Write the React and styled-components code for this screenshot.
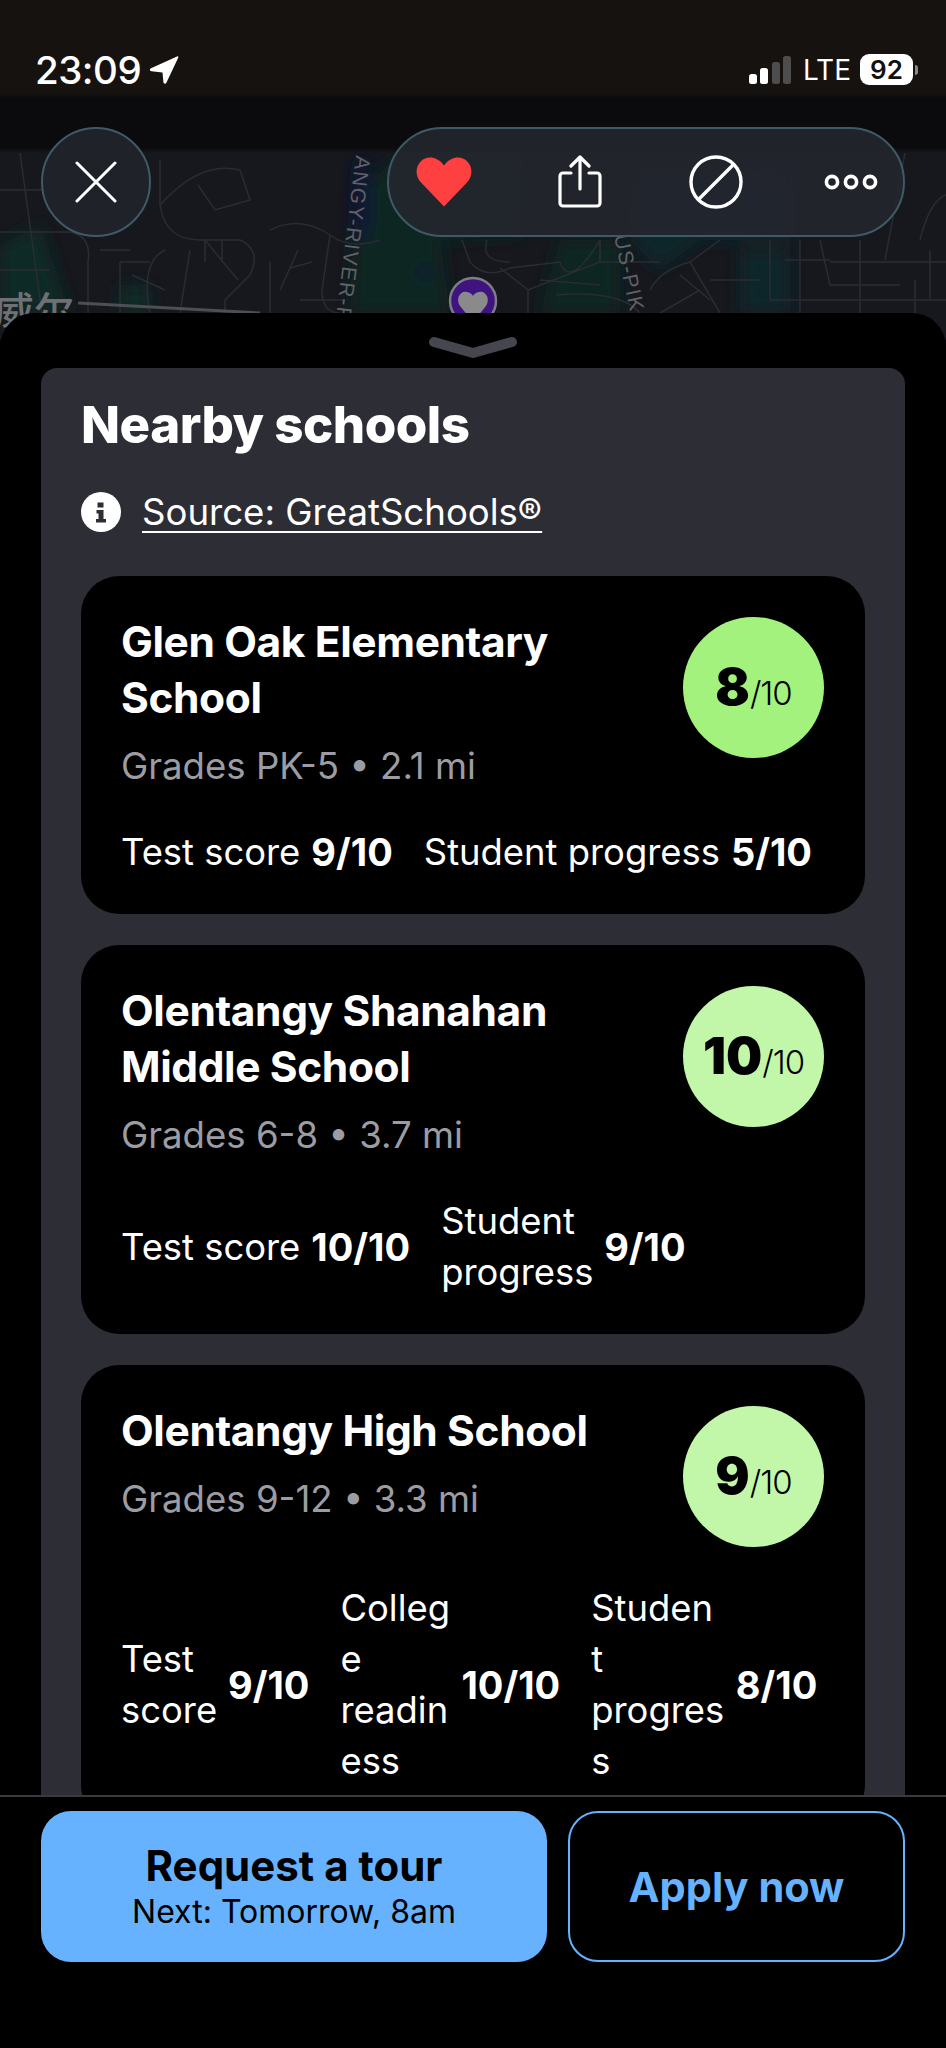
import React from "react";
import styled, { createGlobalStyle } from "styled-components";

const schools = [
  {
    name: ["Glen Oak Elementary", "School"],
    meta: "Grades PK-5 • 2.1 mi",
    score: 8,
    metrics: [
      { label: "Test score", value: "9/10", gap: 11 },
      { label: "Student progress", value: "5/10", gap: 11 },
    ],
  },
  {
    name: ["Olentangy Shanahan", "Middle School"],
    meta: "Grades 6-8 • 3.7 mi",
    score: 10,
    metrics: [
      { label: "Test score", value: "10/10", gap: 11 },
      { label: "Student progress", value: "9/10", width: 155, gap: 8 },
    ],
  },
  {
    name: ["Olentangy High School"],
    meta: "Grades 9-12 • 3.3 mi",
    score: 9,
    metrics: [
      { label: "Test score", value: "9/10", width: 99, gap: 8 },
      { label: "College readiness", value: "10/10", width: 113, gap: 8 },
      { label: "Student progress", value: "8/10", width: 133.6, gap: 11 },
    ],
  },
];

const roads = [
  "M0 190 H60 M20 153 L42 313 M0 232 H70 Q92 236 88 262 V313 M0 270 H50",
  "M160 160 V205 Q165 240 200 240 H240 Q262 250 250 275 L225 300 V313",
  "M165 250 Q140 262 150 313 M205 240 L238 280 M132 275 L165 290 M120 262 H150",
  "M190 250 L180 313 M120 262 V313 M100 250 H130 M205 240 V262 M222 240 V262",
  "M160 205 Q200 160 240 170 L250 200 L215 210 L198 185",
  "M270 230 Q300 215 330 235 Q350 250 380 240 M330 235 L322 290 Q322 313 340 313",
  "M298 250 L280 290 M300 300 H345 M270 262 V313 M290 268 L312 262",
  "M462 240 L470 262 Q485 280 510 268 L560 262 M487 240 Q480 262 510 262",
  "M500 268 L528 290 L600 262 V240 M528 290 V313 M560 262 Q570 290 600 240",
  "M556 295 Q620 290 640 313 M600 240 V262 H660 M540 280 L600 285",
  "M650 290 Q660 270 690 262 L720 240 M690 262 L720 313 M710 280 H760 M660 313 L700 290 M680 275 L710 300",
  "M770 240 V300 M800 240 V313 M820 240 L830 285 H900 M830 262 H946 M860 240 V313 M770 300 H946 M785 260 H830",
  "M905 153 L885 260 M920 240 Q930 200 946 195 M915 280 V313 M930 250 V300",
];

function CloseIcon() {
  return (
    <svg width="42" height="42" viewBox="0 0 42 42" fill="none" stroke="#fff" strokeWidth="3" strokeLinecap="round">
      <path d="M2 2L40 40M40 2L2 40" />
    </svg>
  );
}

function HeartIcon() {
  return (
    <svg width="56" height="50" viewBox="0 0 56 50">
      <path d="M28 49.500 L5 25.500C-1 19 -.8 9.500 5 4.200 11-1.400 21-.8 28 8.500 35-.8 45-1.400 51 4.200 56.800 9.500 57 19 51 25.500Z" fill="#ff4040" />
    </svg>
  );
}

function ShareIcon() {
  return (
    <svg width="44" height="54" viewBox="0 0 44 54" fill="none" stroke="#fff" strokeWidth="3.200" strokeLinecap="round" strokeLinejoin="round">
      <path d="M13 18H5a3 3 0 0 0-3 3v27a3 3 0 0 0 3 3h34a3 3 0 0 0 3-3V21a3 3 0 0 0-3-3h-8" />
      <path d="M22 34V3M13 11l9-9 9 9" />
    </svg>
  );
}

function BlockIcon() {
  return (
    <svg width="54" height="54" viewBox="0 0 54 54" fill="none" stroke="#fff" strokeWidth="3.400">
      <circle cx="27" cy="27" r="25" />
      <path d="M45 9L9 45" />
    </svg>
  );
}

function DotsIcon() {
  return (
    <svg width="54" height="16" viewBox="0 0 54 16" fill="none" stroke="#fff" strokeWidth="3.600">
      <circle cx="8" cy="8" r="5.600" />
      <circle cx="27" cy="8" r="5.600" />
      <circle cx="46" cy="8" r="5.600" />
    </svg>
  );
}

function LocationIcon() {
  return (
    <svg width="30" height="30" viewBox="0 0 30 30">
      <path d="M28 1.500 C29 1 29.600 1.700 29.200 2.800 L17.500 27.500C16.700 29.300 14.600 29 14.400 27L13.500 17.500 2.500 16.300C.5 16 .2 14 2 13.300Z" fill="#fff" />
    </svg>
  );
}

function InfoIcon() {
  return (
    <svg width="40" height="40" viewBox="0 0 40 40">
      <circle cx="20" cy="20" r="20" fill="#fff" />
      <path d="M16.500 10.500h6v5h-6zM15.500 18h7v9h2.500v3.500H15v-3.500h2.500v-5.500h-2z" fill="#2c2d35" />
    </svg>
  );
}

function SignalIcon() {
  return (
    <svg width="42" height="28" viewBox="0 0 42 28">
      <rect x="0" y="18" width="8" height="10" rx="2.500" fill="#fff" />
      <rect x="11" y="12" width="8" height="16" rx="2.500" fill="#fff" />
      <rect x="23" y="6" width="8" height="22" rx="2.500" fill="#4d4d4d" />
      <rect x="34" y="0" width="8" height="28" rx="2.500" fill="#4d4d4d" />
    </svg>
  );
}

function MapArt() {
  return (
    <MapSvg viewBox="0 0 946 340" width="946" height="340">
      <defs>
        <filter id="soft">
          <feGaussianBlur stdDeviation="8" />
        </filter>
        <clipPath id="mapArea">
          <rect x="0" y="153" width="946" height="187" />
        </clipPath>
      </defs>
      <g clipPath="url(#mapArea)">
        <g filter="url(#soft)">
          <path d="M355 200 L350 313 H450 L440 240 L520 235 V153 H400Z" fill="#0e2620" />
          <path d="M560 240 H620 V313 H540Z" fill="#0f2620" />
          <path d="M640 170 H790 V240 H700 L660 270 L630 240Z" fill="#10252a" />
          <path d="M0 245 L40 225 L70 313 H0Z" fill="#0f2a26" />
          <path d="M120 285 H150 V313 H120Z" fill="#0f2a26" />
          <path d="M740 250 H790 V313 H740Z" fill="#10262a" />
          <ellipse cx="362" cy="200" rx="8" ry="46" fill="#11193a" />
          <ellipse cx="425" cy="272" rx="7" ry="7" fill="#11193a" />
          <ellipse cx="770" cy="180" rx="14" ry="22" fill="#161c3c" />
        </g>
        <g fill="none" stroke="#2a2c32" strokeWidth="1.500">
          {roads.map((d, i) => (
            <path key={i} d={d} />
          ))}
        </g>
        <MapLabel transform="translate(356 155) rotate(97)">ANGY-RIVER-R</MapLabel>
        <MapLabel transform="translate(614 236) rotate(78)">US-PIK</MapLabel>
        <MapPlace x="-6" y="326">威尔</MapPlace>
        <path d="M78 303 L260 313" stroke="#4d4f52" strokeWidth="3" fill="none" />
        <circle cx="473" cy="301" r="23" fill="#3f1481" stroke="#7d7d85" strokeWidth="2.500" />
        <path d="M473 322 L460 306 C455 298 461 290 467 292 C470 292.500 472 294 473 296 C474 294 476 292.500 479 292 C485 290 491 298 486 306Z" fill="#8a8a8a" />
      </g>
    </MapSvg>
  );
}

export default function App() {
  return (
    <Screen>
      <GlobalStyle />
      <Backdrop>
        <MapArt />
      </Backdrop>
      <StatusBar>
        <Clock>
          23:09
          <LocationIcon />
        </Clock>
        <StatusRight>
          <SignalIcon />
          <Network>LTE</Network>
          <Battery>92</Battery>
          <BatteryCap />
        </StatusRight>
      </StatusBar>
      <Toolbar>
        <CloseButton>
          <CloseIcon />
        </CloseButton>
        <ActionPill>
          <ActionSlot $gap={0}>
            <HeartIcon />
          </ActionSlot>
          <ActionSlot $gap={86}>
            <ShareIcon />
          </ActionSlot>
          <ActionSlot $gap={87}>
            <BlockIcon />
          </ActionSlot>
          <ActionSlot $gap={81}>
            <DotsIcon />
          </ActionSlot>
        </ActionPill>
      </Toolbar>
      <Sheet>
        <Handle>
          <svg width="88" height="22" viewBox="0 0 88 22" fill="none" stroke="#46464f" strokeWidth="10" strokeLinecap="round" strokeLinejoin="round">
            <path d="M5 5L44 16L83 5" />
          </svg>
        </Handle>
        <Panel>
          <Heading>Nearby schools</Heading>
          <SourceRow>
            <InfoIcon />
            <SourceLink>Source: GreatSchools®</SourceLink>
          </SourceRow>
          <CardList>
            {schools.map((school) => (
              <Card key={school.meta}>
                <CardHead>
                  <div>
                    <SchoolName>
                      {school.name.map((line) => (
                        <div key={line}>{line}</div>
                      ))}
                    </SchoolName>
                    <SchoolMeta>{school.meta}</SchoolMeta>
                  </div>
                  <ScoreBadge $score={school.score}>
                    <ScoreValue>{school.score}</ScoreValue>
                    <ScoreMax>/10</ScoreMax>
                  </ScoreBadge>
                </CardHead>
                <Metrics>
                  {school.metrics.map((metric) => (
                    <Metric key={metric.label} $gap={metric.gap}>
                      <MetricLabel $width={metric.width}>{metric.label}</MetricLabel>
                      <MetricValue>{metric.value}</MetricValue>
                    </Metric>
                  ))}
                </Metrics>
              </Card>
            ))}
          </CardList>
        </Panel>
      </Sheet>
      <Footer>
        <TourButton>
          <TourTitle>Request a tour</TourTitle>
          <TourNext>Next: Tomorrow, 8am</TourNext>
        </TourButton>
        <ApplyButton>Apply now</ApplyButton>
      </Footer>
    </Screen>
  );
}

const GlobalStyle = createGlobalStyle`
  html, body {
    margin: 0;
    padding: 0;
    background: #000;
  }
  * {
    box-sizing: border-box;
  }
`;

const Screen = styled.div`
  position: relative;
  width: 946px;
  height: 2048px;
  display: flex;
  flex-direction: column;
  overflow: hidden;
  background: #000;
  color: #fff;
  font-family: Inter, "Noto Sans", sans-serif;
`;

const Backdrop = styled.div`
  position: absolute;
  top: 0;
  left: 0;
  width: 946px;
  height: 340px;
  background: linear-gradient(
    to bottom,
    #151210 0,
    #151210 94px,
    #0b0b0d 98px,
    #0b0b0d 148px,
    #16181e 153px,
    #16181e 340px
  );
`;

const MapSvg = styled.svg`
  display: block;
`;

const MapLabel = styled.text`
  font-family: "Liberation Sans", sans-serif;
  font-size: 21px;
  letter-spacing: 1.5px;
  fill: #5f6166;
`;

const MapPlace = styled.text`
  font-family: "Noto Sans CJK SC", sans-serif;
  font-size: 40px;
  font-weight: 500;
  fill: #6f7073;
`;

const StatusBar = styled.div`
  position: relative;
  height: 96px;
  flex: none;
  display: flex;
  justify-content: space-between;
  align-items: center;
  padding: 43px 28px 0 35px;
`;

const Clock = styled.div`
  display: flex;
  align-items: center;
  gap: 8px;
  font-size: 38.500px;
  font-weight: 500;
  letter-spacing: -0.5px;
`;

const StatusRight = styled.div`
  display: flex;
  align-items: center;
`;

const Network = styled.span`
  margin-left: 12px;
  font-size: 28px;
  font-weight: 400;
`;

const Battery = styled.span`
  margin-left: 9px;
  width: 53px;
  height: 31px;
  display: flex;
  align-items: center;
  justify-content: center;
  border-radius: 9px;
  background: #fff;
  color: #111;
  font-size: 26px;
  font-weight: 600;
`;

const BatteryCap = styled.span`
  width: 3px;
  height: 10px;
  margin-left: 2px;
  border-radius: 0 3px 3px 0;
  background: #8a8a8a;
`;

const Toolbar = styled.div`
  position: relative;
  flex: none;
  height: 110px;
  margin-top: 31px;
  padding: 0 41px;
  display: flex;
  justify-content: space-between;
`;

const CloseButton = styled.div`
  width: 110px;
  height: 110px;
  display: flex;
  align-items: center;
  justify-content: center;
  border-radius: 50%;
  border: 2px solid #3f5a66;
  background: #1f2228;
`;

const ActionPill = styled.div`
  width: 518px;
  height: 110px;
  display: flex;
  align-items: center;
  padding-left: 27px;
  border-radius: 55px;
  border: 2px solid #3f5a66;
  background: rgba(36, 38, 46, 0.9);
`;

const ActionSlot = styled.div`
  display: flex;
  margin-left: ${(props) => props.$gap}px;
`;

const Sheet = styled.div`
  position: relative;
  flex: 1;
  min-height: 0;
  margin-top: 76px;
  display: flex;
  flex-direction: column;
  border-radius: 34px 34px 0 0;
  background: #000;
`;

const Handle = styled.div`
  flex: none;
  height: 55px;
  display: flex;
  justify-content: center;
  padding-top: 24px;
`;

const Panel = styled.div`
  flex: 1;
  min-height: 0;
  margin: 0 41px;
  padding: 0 40px;
  overflow: hidden;
  border-radius: 16px 16px 0 0;
  background: #2c2d35;
`;

const Heading = styled.h2`
  margin: 26px 0 0;
  font-size: 51px;
  line-height: 62px;
  font-weight: 800;
  letter-spacing: -0.5px;
  color: #fff;
`;

const SourceRow = styled.div`
  display: flex;
  align-items: center;
  gap: 21px;
  margin-top: 31px;
`;

const SourceLink = styled.span`
  font-size: 36.600px;
  line-height: 50px;
  text-decoration: underline;
  text-underline-offset: 6px;
  text-decoration-thickness: 2px;
`;

const CardList = styled.div`
  display: flex;
  flex-direction: column;
  gap: 31px;
  margin-top: 39px;
`;

const Card = styled.div`
  flex: none;
  padding: 38px 40px 36px 40px;
  border-radius: 38px;
  background: #000;
`;

const CardHead = styled.div`
  display: flex;
  justify-content: space-between;
  align-items: flex-start;
  padding-right: 1px;
`;

const SchoolName = styled.div`
  font-size: 42.500px;
  line-height: 56px;
  font-weight: 700;
  letter-spacing: -0.4px;
`;

const SchoolMeta = styled.div`
  margin-top: 15px;
  font-size: 36.600px;
  line-height: 50px;
  color: #9c9ca4;
`;

const ScoreBadge = styled.div`
  flex: none;
  width: 141px;
  height: 141px;
  margin-top: 3px;
  display: flex;
  align-items: baseline;
  justify-content: center;
  padding-top: 42px;
  border-radius: 50%;
  color: #000;
  background: ${(props) => (props.$score >= 9 ? "#c2f7a9" : "#a3f27e")};
`;

const ScoreValue = styled.span`
  font-size: 51px;
  line-height: 56px;
  font-weight: 900;
`;

const ScoreMax = styled.span`
  font-size: 33px;
  font-weight: 300;
  letter-spacing: -1px;
`;

const Metrics = styled.div`
  display: flex;
  align-items: center;
  gap: 31px;
  margin-top: 36px;
`;

const Metric = styled.div`
  display: flex;
  align-items: center;
  gap: ${(props) => props.$gap}px;
`;

const MetricLabel = styled.span`
  font-size: 36.400px;
  line-height: 51px;
  overflow-wrap: anywhere;
  width: ${(props) => (props.$width ? `${props.$width}px` : "auto")};
`;

const MetricValue = styled.span`
  font-size: 38px;
  line-height: 51px;
  font-weight: 700;
  white-space: nowrap;
`;

const Footer = styled.div`
  position: relative;
  flex: none;
  height: 253px;
  display: flex;
  gap: 21px;
  padding: 14px 41px 0;
  border-top: 2px solid #3a3a3c;
  background: #000;
`;

const TourButton = styled.div`
  width: 506px;
  height: 151px;
  display: flex;
  flex-direction: column;
  align-items: center;
  justify-content: center;
  border-radius: 30px;
  background: #66b2ff;
  color: #000;
`;

const TourTitle = styled.div`
  font-size: 42px;
  line-height: 50px;
  font-weight: 700;
`;

const TourNext = styled.div`
  font-size: 32px;
  line-height: 42px;
`;

const ApplyButton = styled.div`
  width: 337px;
  height: 151px;
  display: flex;
  align-items: center;
  justify-content: center;
  border-radius: 30px;
  border: 2px solid #66b2ff;
  color: #66b2ff;
  font-size: 41.500px;
  font-weight: 700;
`;
